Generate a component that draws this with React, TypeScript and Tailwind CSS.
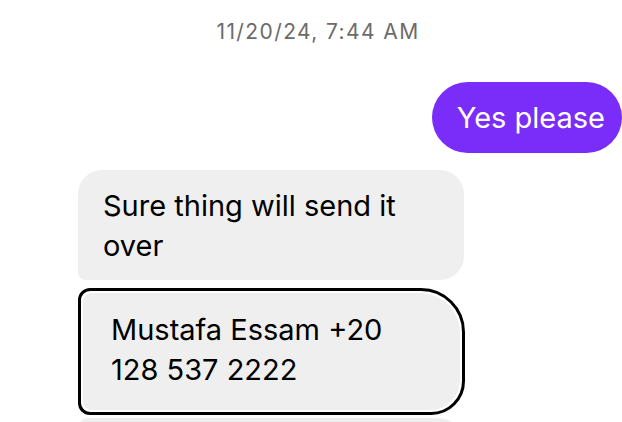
export default function App() {
  return (
    <main
      className="flex h-[422px] w-[622px] flex-col overflow-hidden bg-white"
      style={{ fontFamily: 'Inter, "Noto Sans", sans-serif' }}
    >
      <div className="pl-[14px] pt-[18px] text-center text-[21px] leading-[28px] tracking-[1.4px] text-[#6b6b6b]">
        11/20/24, 7:44 AM
      </div>

      <div className="mt-[36px] flex justify-end">
        <div className="flex h-[71px] items-center rounded-full bg-[#7a2df8] pl-[25px] pr-[17px] text-[29px] text-white">
          Yes please
        </div>
      </div>

      <div className="mt-[17px] ml-[78px] flex flex-col">
        <div className="w-[386px] rounded-[24px] rounded-bl-[8px] bg-[#efefef] pl-[25px] pr-[20px] pt-[16px] pb-[14px] text-[29px] leading-[40px] text-black">
          Sure thing will send it over
        </div>

        <div className="mt-[8px] w-[387px] rounded-[12px] rounded-tr-[44px] rounded-br-[34px] border-[3px] border-black bg-white p-[2px]">
          <div className="h-[117px] rounded-[9px] rounded-tr-[40px] rounded-br-[30px] bg-[#efefef] pl-[28px] pr-[60px] pt-[17px] text-[29px] leading-[40px] text-black">
            Mustafa Essam +20 128 537 2222
          </div>
        </div>

        <div className="mt-[3px] h-[60px] w-[384px] rounded-[10px] rounded-tr-[24px] bg-[#efefef]" />
      </div>
    </main>
  );
}
